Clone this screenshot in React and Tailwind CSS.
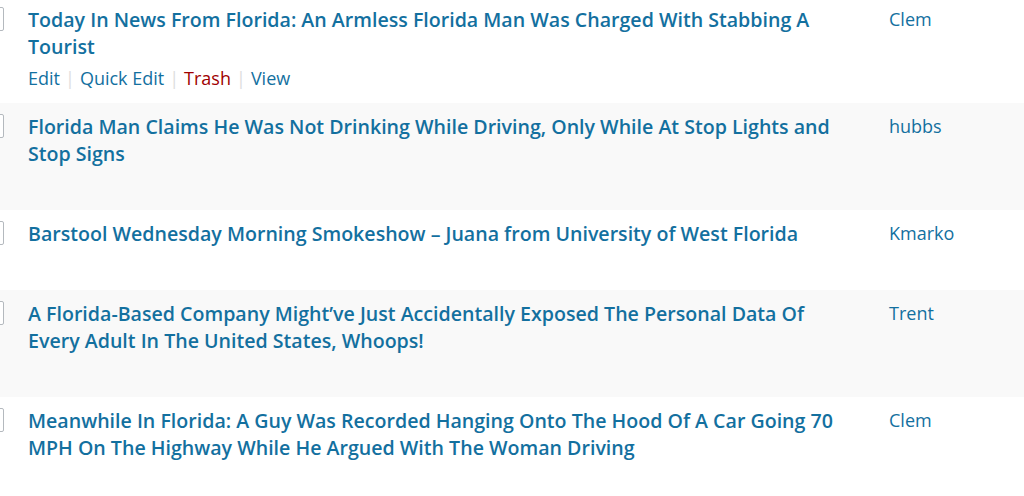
import React from "react";

const rows = [
  {
    title: "Today In News From Florida: An Armless Florida Man Was Charged With Stabbing A Tourist",
    author: "Clem",
    actions: true,
  },
  {
    title: "Florida Man Claims He Was Not Drinking While Driving, Only While At Stop Lights and Stop Signs",
    author: "hubbs",
  },
  {
    title: "Barstool Wednesday Morning Smokeshow – Juana from University of West Florida",
    author: "Kmarko",
  },
  {
    title: "A Florida-Based Company Might’ve Just Accidentally Exposed The Personal Data Of Every Adult In The United States, Whoops!",
    author: "Trent",
  },
  {
    title: "Meanwhile In Florida: A Guy Was Recorded Hanging Onto The Hood Of A Car Going 70 MPH On The Highway While He Argued With The Woman Driving",
    author: "Clem",
  },
];

function Sep() {
  return <span className="text-[#dddddd] px-[5px]">|</span>;
}

export default function App() {
  return (
    <div
      className="w-[1024px] h-[496px] overflow-hidden bg-white"
      style={{ fontFamily: '"Open Sans", "Noto Sans", sans-serif' }}
    >
      <div className="flex flex-col mt-[-4px]">
        {rows.map((r, i) => (
          <div
            key={i}
            className={`flex pt-[10px] pb-[12px] ${i % 2 === 1 ? "bg-[#f9f9f9]" : "bg-white"}`}
          >
            <div className="shrink-0 w-[22px] h-[24px] ml-[-18px] mt-[1px] border border-[#b4b9be] bg-white rounded-[2px]" />
            <div className="shrink-0 w-[826px] ml-[24px]">
              <div className="text-[19.6px] leading-[27px] font-semibold text-[#13709f]">
                {r.title}
              </div>
              <div
                className={`mt-[5px] text-[18px] leading-[26px] text-[#13709f] whitespace-nowrap ${r.actions ? "" : "invisible"}`}
              >
                <span>Edit</span>
                <Sep />
                <span>Quick Edit</span>
                <Sep />
                <span className="text-[#a00000]">Trash</span>
                <Sep />
                <span>View</span>
              </div>
            </div>
            <div className="pl-[35px] text-[18px] leading-[27px] text-[#13709f]">
              {r.author}
            </div>
          </div>
        ))}
      </div>
    </div>
  );
}
